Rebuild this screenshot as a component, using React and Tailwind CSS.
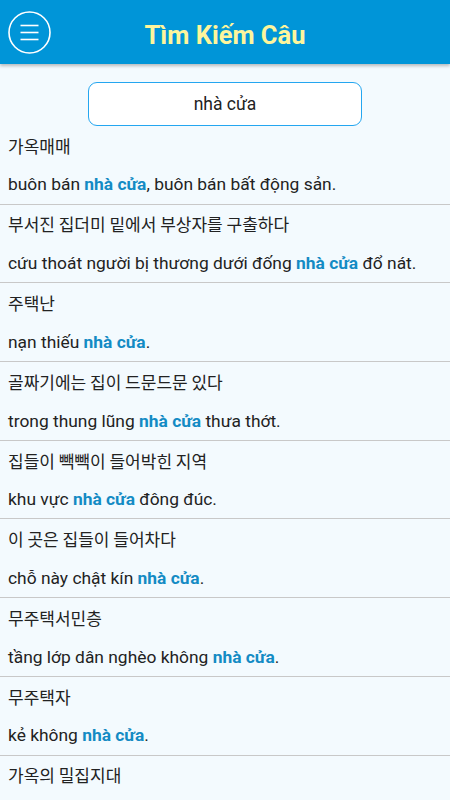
import React from "react";

const items = [
  { ko: "가옥매매", pre: "buôn bán ", post: ", buôn bán bất động sản." },
  { ko: "부서진 집더미 밑에서 부상자를 구출하다", pre: "cứu thoát người bị thương dưới đống ", post: " đổ nát." },
  { ko: "주택난", pre: "nạn thiếu ", post: "." },
  { ko: "골짜기에는 집이 드문드문 있다", pre: "trong thung lũng ", post: " thưa thớt." },
  { ko: "집들이 빽빽이 들어박힌 지역", pre: "khu vực ", post: " đông đúc." },
  { ko: "이 곳은 집들이 들어차다", pre: "chỗ này chật kín ", post: "." },
  { ko: "무주택서민층", pre: "tầng lớp dân nghèo không ", post: "." },
  { ko: "무주택자", pre: "kẻ không ", post: "." },
  { ko: "가옥의 밀집지대", pre: "", post: "" },
];

const Header = () => (
  <header className="h-[64px] bg-[#0095d8] flex items-center relative shadow-[0_2px_3px_rgba(0,0,0,0.25)] z-10">
    <button className="absolute left-[8px] top-[11px] w-[43px] h-[43px]">
      <svg width="43" height="43" viewBox="0 0 43 43" fill="none" stroke="white" strokeWidth="1.6">
        <circle cx="21.5" cy="21.5" r="20.5" />
        <line x1="12.5" y1="14.5" x2="30.5" y2="14.5" />
        <line x1="12.5" y1="21.5" x2="30.5" y2="21.5" />
        <line x1="12.5" y1="28.5" x2="30.5" y2="28.5" />
      </svg>
    </button>
    <h1 className="w-full text-center text-[25.5px] font-bold text-[#fdf59c] pt-[6px]">Tìm Kiếm Câu</h1>
  </header>
);

export default function App() {
  return (
    <div className="w-[450px] h-[800px] overflow-hidden bg-[#f3fafe] text-[#222] font-['Roboto','Noto_Sans_CJK_KR',sans-serif]">
      <Header />
      <div className="flex justify-center pt-[18px]">
        <div className="w-[274px] h-[44px] rounded-[9px] border border-[#24a6f0] bg-white flex items-center justify-center text-[17.5px]">
          nhà cửa
        </div>
      </div>
      <ul>
        {items.map((it, i) => (
          <li key={i} className="border-b border-[#c8c8c8] px-[8px] h-[78.7px]">
            <div className="h-[39px] flex items-center text-[17px] font-['Noto_Sans_CJK_KR',sans-serif]">{it.ko}</div>
            <div className="h-[39px] flex items-center text-[17.4px]">
              {it.pre || it.post ? (
                <span>
                  {it.pre}
                  <b className="text-[#138bc4] font-bold">nhà cửa</b>
                  {it.post}
                </span>
              ) : null}
            </div>
          </li>
        ))}
      </ul>
    </div>
  );
}
